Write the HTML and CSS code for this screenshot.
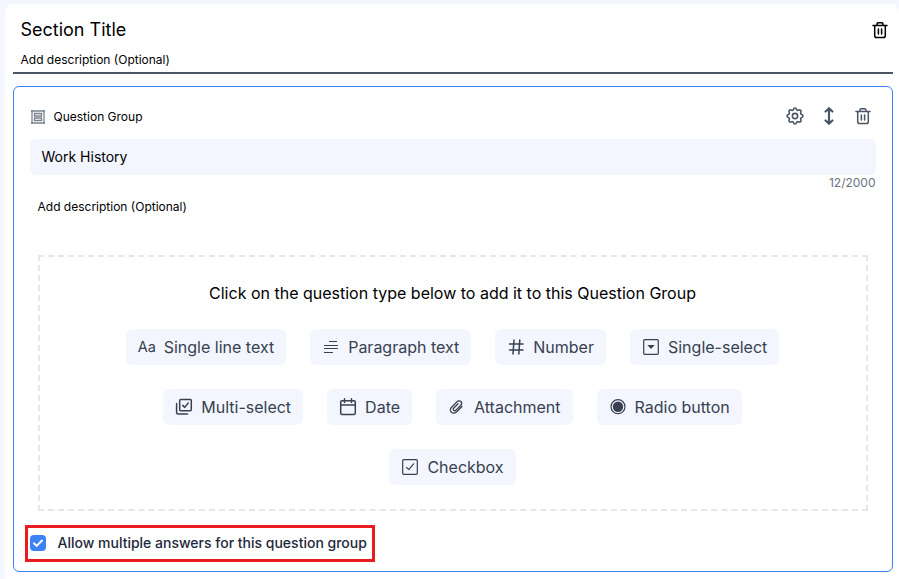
FILE: index.html
```html
<!DOCTYPE html>
<html lang="en">
<head>
<meta charset="utf-8">
<title>Section editor</title>
<link rel="stylesheet" href="styles.css">
</head>
<body>
<svg class="defs" width="0" height="0">
  <symbol id="trash" viewBox="0 0 18 18">
    <path d="M2 4.5h14M3.7 4.5v10.2q0 1.8 1.8 1.8h7q1.8 0 1.8-1.8V4.5M6 4.5V3q0-1.2 1.2-1.2h3.6Q12 1.8 12 3v1.5M7.4 8v5M10.6 8v5"/>
  </symbol>
</svg>
<main class="panel">
  <header class="section-head">
    <div>
      <h1 class="section-title">Section Title</h1>
      <p class="section-desc">Add description (Optional)</p>
    </div>
    <svg class="icon section-trash" viewBox="0 0 18 18"><use href="#trash"/></svg>
  </header>
  <section class="group">
    <div class="group-head">
      <svg class="group-icon" viewBox="0 0 14 14"><path d="M1 0v14M13 0v14M0 1h14M0 13h14M3.5 3.5h7v2.5h-7zM3.5 8h7v2.5h-7z"/></svg>
      <span class="group-label">Question Group</span>
      <div class="actions">
        <svg class="icon" viewBox="1.8 1.8 20.4 20.4"><path class="gear" d="M10.325 4.317c.426-1.756 2.924-1.756 3.35 0a1.724 1.724 0 0 0 2.573 1.066c1.543-.94 3.31.826 2.37 2.37a1.724 1.724 0 0 0 1.065 2.572c1.756.426 1.756 2.924 0 3.35a1.724 1.724 0 0 0-1.066 2.573c.94 1.543-.826 3.31-2.37 2.37a1.724 1.724 0 0 0-2.572 1.065c-.426 1.756-2.924 1.756-3.35 0a1.724 1.724 0 0 0-2.573-1.066c-1.543.94-3.31-.826-2.37-2.37a1.724 1.724 0 0 0-1.065-2.572c-1.756-.426-1.756-2.924 0-3.35a1.724 1.724 0 0 0 1.066-2.573c-.94-1.543.826-3.31 2.37-2.37.996.608 2.296.07 2.572-1.065zM15 12a3 3 0 1 1-6 0 3 3 0 0 1 6 0z"/></svg>
        <svg class="icon" viewBox="0 0 18 18"><path class="bold" d="M9 1.5v15M5.6 4.5 9 1.2l3.4 3.3M5.6 13.5 9 16.8l3.4-3.3"/></svg>
        <svg class="icon" viewBox="0 0 18 18"><use href="#trash"/></svg>
      </div>
    </div>
    <div class="title-field">Work History</div>
    <div class="counter">12/2000</div>
    <p class="group-desc">Add description (Optional)</p>
    <div class="dropzone">
      <p class="prompt">Click on the question type below to add it to this Question Group</p>
      <div class="chips">
        <div class="chip"><span class="aa">Aa</span>Single line text</div>
        <div class="chip"><svg class="icon" viewBox="0 0 18 18"><path d="M7 3.5h8M2 7.5h14M2 10.5h14M2 14.5h9" class="lines"/></svg>Paragraph text</div>
        <div class="chip"><svg class="icon" viewBox="0 0 18 18"><path d="M2.5 6h13.5M2.5 12H16M7 2 6 16M12.8 2l-1 14"/></svg>Number</div>
        <div class="chip"><svg class="icon" viewBox="0 0 18 18"><rect x="1.7" y="1.7" width="14.6" height="14.6" rx="1" class="thin"/><path class="solid" d="M5.3 7h7.4L9 11z"/></svg>Single-select</div>
      </div>
      <div class="chips">
        <div class="chip"><svg class="icon" viewBox="0 0 18 18"><rect x="4.7" y="1.5" width="11.6" height="11.3" rx="1"/><path d="M1.6 5.5v9q0 1.5 1.5 1.5h9.4M7.7 7.4l2 2 3.6-4.4"/></svg>Multi-select</div>
        <div class="chip"><svg class="icon" viewBox="0 0 18 18"><rect x="1.7" y="2.7" width="14.6" height="13.8" rx="1.3"/><path d="M1.7 7h14.6M5.5.8v3.8M12.5.8v3.8"/></svg>Date</div>
        <div class="chip"><svg class="icon clip" viewBox="0 0 18 18"><path d="M15.4 8.5 9.6 14.3C7.7 16.2 5 16.4 3.5 14.8 1.9 13.2 2.1 10.9 3.8 9.2L9.7 3.2C11 1.9 13 1.7 14.2 2.9 15.4 4.1 15.2 6 13.9 7.3L8.7 12.5C7.9 13.3 6.8 13.4 6.1 12.7 5.4 12 5.5 10.9 6.3 10.1L11 5.4"/></svg>Attachment</div>
        <div class="chip"><svg class="icon" viewBox="0 0 18 18"><circle cx="9" cy="8.7" r="7" class="thin"/><circle cx="9" cy="8.7" r="5.2" class="solid"/></svg>Radio button</div>
      </div>
      <div class="chips">
        <div class="chip"><svg class="icon" viewBox="0 0 18 18"><rect x="1.7" y="1.7" width="14.6" height="14.6" rx="1" class="thin"/><path class="thin" d="m5.5 9.3 2.3 2.3 4.8-5.8"/></svg>Checkbox</div>
      </div>
    </div>
    <div class="allow">
      <svg class="check" viewBox="0 0 16 16"><path d="m4 8.3 2.7 2.6L12 5.5"/></svg>
      <span class="allow-label">Allow multiple answers for this question group</span>
    </div>
  </section>
</main>
</body>
</html>
```
FILE: styles.css
```css
* { box-sizing: border-box; }
body {
  margin: 0;
  padding: 4px 0 0 5px;
  height: 579px;
  overflow: hidden;
  background: #f3f6fe;
  font-family: Inter, "Liberation Sans", sans-serif;
  color: #000;
}
h1, p { margin: 0; font-weight: 400; }
.defs { position: absolute; }
.panel {
  height: 575px;
  padding: 0 6px 0 8px;
  background: #fff;
  border-radius: 8px 8px 0 0;
}
.section-head {
  display: flex;
  justify-content: space-between;
  height: 70px;
  padding: 14px 4px 0 7.5px;
  border-bottom: 2px solid #4b5563;
}
.section-title { font-size: 18px; line-height: 24px; }
.section-desc { margin-top: 10px; font-size: 12px; line-height: 16px; }
.icon {
  width: 18px;
  height: 18px;
  flex: none;
  fill: none;
  stroke: currentColor;
  stroke-width: 1.5;
  stroke-linecap: round;
  stroke-linejoin: round;
}
.section-trash { margin-top: 3px; }
.group {
  height: 486px;
  margin-top: 12px;
  padding: 17px 16px 0;
  border: 1px solid #3b82f6;
  border-radius: 6px;
}
.group-head { display: flex; align-items: center; height: 24px; }
.group-icon {
  width: 14px;
  height: 14px;
  margin: 2px 8.5px 0 1px;
  fill: none;
  stroke: #7b828e;
  stroke-width: 1.3;
}
.group-label { font-size: 12px; line-height: 16px; margin-top: 1px; }
.actions { display: flex; gap: 16px; margin: 0 4px 0 auto; color: #4b5563; }
.gear { stroke-width: 1.8; }
.bold { stroke-width: 2.2; }
.title-field {
  height: 36px;
  margin-top: 11px;
  padding-left: 11.5px;
  border-radius: 6px;
  background: #f3f6fe;
  font-size: 14px;
  line-height: 36px;
}
.counter { height: 16px; padding-right: 0.5px; color: #6b7280; font-size: 12px; line-height: 16px; text-align: right; }
.group-desc { margin: 8px 0 0 7.5px; font-size: 12px; line-height: 16px; }
.dropzone {
  height: 256px;
  margin: 40px 8px 0;
  padding: 24px 1px 0 0;
  border: 2px dashed #e5e7eb;
}
.prompt { margin-bottom: 24px; font-size: 16px; line-height: 24px; text-align: center; }
.chips { display: flex; justify-content: center; gap: 24px; margin-bottom: 24px; }
.chip {
  display: flex;
  align-items: center;
  gap: 8px;
  height: 36px;
  padding: 0 12px;
  border-radius: 6px;
  background: #f3f6fe;
  color: #374151;
  font-size: 16px;
  line-height: 24px;
  white-space: nowrap;
}
.aa { width: 18px; font-size: 14.5px; }
.clip { padding: 1px 1.5px 1px 0; }
.thin { stroke-width: 1.2; }
.lines { stroke-width: 1.2; stroke-linecap: butt; }
.solid { fill: currentColor; stroke: none; }
.allow {
  display: flex;
  align-items: center;
  gap: 11.5px;
  width: 350px;
  height: 37px;
  margin: 14px 0 0 -5px;
  padding: 0 0 1px 2px;
  border: 3px solid #e91d1f;
  color: #1e293b;
  font-size: 14px;
  font-weight: 500;
  white-space: nowrap;
}
.allow-label { line-height: 20px; padding-bottom: 1px; }
.check {
  width: 16px;
  height: 16px;
  border-radius: 4px;
  background: #3b82f6;
  fill: none;
  stroke: #fff;
  stroke-width: 2;
  stroke-linecap: round;
  stroke-linejoin: round;
}
```
